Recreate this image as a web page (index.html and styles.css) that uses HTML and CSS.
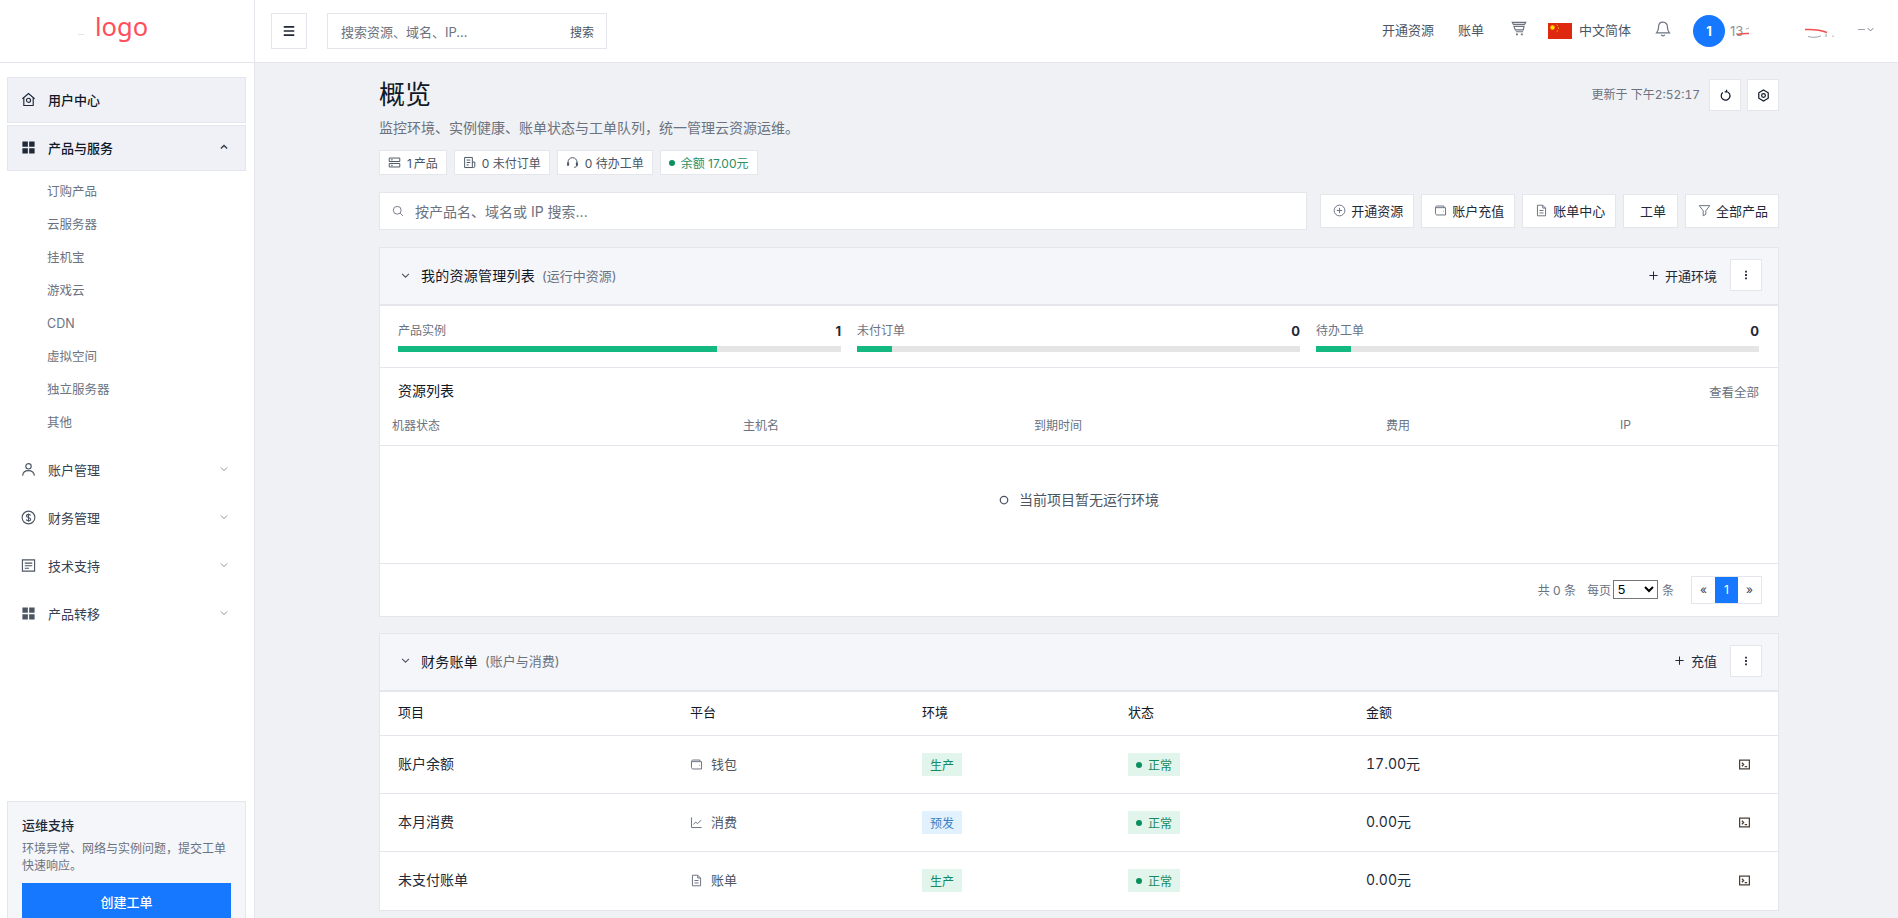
FILE: index.html
```html
<!DOCTYPE html>
<html lang="zh-CN">
<head>
    <meta charset="UTF-8">
    <meta name="viewport" content="width=device-width, initial-scale=1.0">
    <title>概览</title>
    <link rel="stylesheet" href="styles.css">
</head>
<body>
    <svg class="sprite" xmlns="http://www.w3.org/2000/svg">
        <symbol id="i-home" viewBox="0 0 16 16"><path d="M1.5 7.2 8 1.6l6.5 5.6M3 6.2V14.4h10V6.2"/><circle cx="8" cy="8.8" r="2.2"/></symbol>
        <symbol id="i-grid" viewBox="0 0 16 16"><path class="fill" d="M1.5 1.5h5.8v5.8H1.5zM8.7 1.5h5.8v5.8H8.7zM1.5 8.7h5.8v5.8H1.5zM8.7 8.7h5.8v5.8H8.7z"/></symbol>
        <symbol id="i-up" viewBox="0 0 16 16"><path d="M3 10.5 8 5.5l5 5"/></symbol>
        <symbol id="i-down" viewBox="0 0 16 16"><path d="M3 5.5 8 10.5l5-5"/></symbol>
        <symbol id="i-user" viewBox="0 0 16 16"><circle cx="8" cy="4.6" r="2.9"/><path d="M1.8 14.6c0-3.4 2.6-5.4 6.2-5.4s6.2 2 6.2 5.4"/></symbol>
        <symbol id="i-dollar" viewBox="0 0 16 16"><circle cx="8" cy="8" r="6.8"/><path d="M10.2 5.9C9.8 5 9 4.7 8 4.7c-1.300 0-2.200.6-2.200 1.600C5.800 8.600 10.300 7.400 10.300 9.800c0 1-.9 1.600-2.300 1.600-1.100 0-2-.4-2.400-1.300M8 3.600v8.800"/></symbol>
        <symbol id="i-list" viewBox="0 0 16 16"><path d="M1.500 2h13v12h-13zM4 5.500h8M4 8.200h8M4 10.900h4.500"/></symbol>
        <symbol id="i-server" viewBox="0 0 16 16"><path d="M1.500 2.500h13v4.300h-13zM1.500 9.200h13v4.300h-13zM3.800 4.700h2M3.800 11.400h2"/></symbol>
        <symbol id="i-receipt" viewBox="0 0 16 16"><path d="M2 1.800h9.500v12.400H2zM11.500 7.500h3v5.200a1.500 1.500 0 0 1-1.500 1.500h-1.500M4.500 5h4.500M4.500 8h4.500M4.500 11h2.500"/></symbol>
        <symbol id="i-headset" viewBox="0 0 16 16"><path d="M2.500 9.500V7.500a5.500 5.500 0 0 1 11 0v2M13.500 11c0 1.900-1.500 3-3.500 3"/><path class="fill" d="M1.300 8h2.500v4H1.300zM12.200 8h2.500v4h-2.500z"/></symbol>
        <symbol id="i-search" viewBox="0 0 16 16"><circle cx="7" cy="7" r="5.200"/><path d="m11 11 3.500 3.500"/></symbol>
        <symbol id="i-plus-circle" viewBox="0 0 16 16"><circle cx="8" cy="8" r="6.600"/><path d="M8 4.800v6.400M4.800 8h6.400"/></symbol>
        <symbol id="i-wallet" viewBox="0 0 16 16"><path d="M1.800 4.500c0-1.200.8-2 2-2h8.400v2M1.800 4.500h12.400v9H3.800c-1.200 0-2-.8-2-2zM11.500 9h.8"/></symbol>
        <symbol id="i-file" viewBox="0 0 16 16"><path d="M3 1.500h6.500L13 5v9.500H3zM9.500 1.500V5H13M5.500 8h5M5.500 11h5"/></symbol>
        <symbol id="i-filter" viewBox="0 0 16 16"><path d="M1.500 2h13L9.600 8.300v4.500L6.400 14.500V8.300z"/></symbol>
        <symbol id="i-plus" viewBox="0 0 16 16"><path d="M8 2v12M2 8h12"/></symbol>
        <symbol id="i-kebab" viewBox="0 0 16 16"><path class="fill" d="M6.800 2.200h2.400v2.400H6.800zM6.800 6.800h2.400v2.400H6.800zM6.800 11.400h2.400v2.400H6.800z"/></symbol>
        <symbol id="i-refresh" viewBox="0 0 16 16"><path d="M9.200 3.100A5.400 5.400 0 1 1 4.600 4.300M9.400 .9 9.200 3.300l-2.300.4"/></symbol>
        <symbol id="i-gear" viewBox="0 0 16 16"><path d="M8 1.300 13.800 4.600v6.800L8 14.700 2.200 11.400V4.600z"/><circle cx="8" cy="8" r="2.300"/></symbol>
        <symbol id="i-terminal" viewBox="0 0 16 16"><path d="M2 2.500h12v11H2zM4.800 5.800 7 8l-2.200 2.200M8.200 10.500h3"/></symbol>
        <symbol id="i-chart" viewBox="0 0 16 16"><path d="M1.800 1.800v12.400h12.600M4.200 10.500 7 7.500l2.400 1.800 4.500-4.300"/></symbol>
        <symbol id="i-cart" viewBox="0 0 16 16"><path d="M.8 1.500h14.400L14 3.600H2zM2.600 5.700h10.800L12.600 9.500H4zM4.600 11.500h7.800"/><path class="fill" d="M4.800 13.200h2v2h-2zM10 13.200h2v2h-2z"/></symbol>
        <symbol id="i-bell" viewBox="0 0 16 16"><path d="M8 1.200c-2.700 0-4.400 2-4.400 4.600 0 3.200-.8 4.800-2 6h12.800c-1.200-1.200-2-2.800-2-6 0-2.600-1.700-4.600-4.400-4.600zM6.200 13.800c.4.800 1 1.100 1.800 1.100s1.400-.3 1.800-1.100"/></symbol>
        <symbol id="i-menu" viewBox="0 0 16 16"><path d="M2 3.200h12M2 8h12M2 12.800h12"/></symbol>
        <symbol id="i-ring" viewBox="0 0 16 16"><circle cx="8" cy="8" r="6"/></symbol>
    </svg>

    <header class="topbar">
        <div class="brand"><span class="logo-mark"></span><span class="logo">logo</span></div>
        <button class="icon-btn menu-btn"><svg class="ico ico-menu"><use href="#i-menu"/></svg></button>
        <div class="top-search">
            <span>搜索资源、域名、IP...</span>
            <span class="top-search-btn">搜索</span>
        </div>
        <nav class="top-right">
            <a class="top-link">开通资源</a>
            <a class="top-link link-bill">账单</a>
            <svg class="ico ico-cart"><use href="#i-cart"/></svg>
            <svg class="flag" viewBox="0 0 24 16">
                <rect width="24" height="16" fill="#de2910"/>
                <circle cx="4.500" cy="4.500" r="2.200" fill="#ffde00"/>
                <path d="M8.500 1.800 10 3M10.500 4.500v1.500M10 7.500 8.500 8.800" stroke="#f2a40c" stroke-width="1" fill="none"/>
            </svg>
            <a class="top-link link-lang">中文简体</a>
            <svg class="ico ico-bell"><use href="#i-bell"/></svg>
            <span class="avatar">1</span>
            <div class="user-name">
                <span class="user-text">13</span>
                <svg class="redact" viewBox="0 0 136 16">
                    <path d="M7 11.500c4-.8 8-1.200 12-1M75 6.500c9-.4 16 .4 22 3" stroke="#f0504f" stroke-width="1.500" fill="none"/>
                    <path d="M19 5c-2 .6-3 1-3 1.500M78 13.500c5 1.400 9 1 13-.6M96 11v3M103 12.500v1.500M128 6.500h7" stroke="#9ca3af" stroke-width="1" fill="none"/>
                </svg>
            </div>
            <svg class="ico ico-caret"><use href="#i-down"/></svg>
        </nav>
    </header>

    <div class="layout">
        <aside class="sidebar">
            <div class="side-nav">
                <a class="nav-item active">
                    <svg class="ico nav-ico"><use href="#i-home"/></svg>
                    <span>用户中心</span>
                </a>
                <a class="nav-item active open">
                    <svg class="ico nav-ico"><use href="#i-grid"/></svg>
                    <span>产品与服务</span>
                    <svg class="ico nav-arrow"><use href="#i-up"/></svg>
                </a>
                <div class="sub-nav">
                    <a>订购产品</a>
                    <a>云服务器</a>
                    <a>挂机宝</a>
                    <a>游戏云</a>
                    <a>CDN</a>
                    <a>虚拟空间</a>
                    <a>独立服务器</a>
                    <a>其他</a>
                </div>
                <a class="nav-item">
                    <svg class="ico nav-ico"><use href="#i-user"/></svg>
                    <span>账户管理</span>
                    <svg class="ico nav-arrow"><use href="#i-down"/></svg>
                </a>
                <a class="nav-item">
                    <svg class="ico nav-ico"><use href="#i-dollar"/></svg>
                    <span>财务管理</span>
                    <svg class="ico nav-arrow"><use href="#i-down"/></svg>
                </a>
                <a class="nav-item">
                    <svg class="ico nav-ico"><use href="#i-list"/></svg>
                    <span>技术支持</span>
                    <svg class="ico nav-arrow"><use href="#i-down"/></svg>
                </a>
                <a class="nav-item">
                    <svg class="ico nav-ico"><use href="#i-grid"/></svg>
                    <span>产品转移</span>
                    <svg class="ico nav-arrow"><use href="#i-down"/></svg>
                </a>
            </div>
            <div class="support">
                <div class="support-title">运维支持</div>
                <p>环境异常、网络与实例问题，提交工单快速响应。</p>
                <button class="support-btn">创建工单</button>
            </div>
        </aside>

        <main class="main">
            <div class="page-head">
                <div>
                    <h1>概览</h1>
                    <p class="page-desc">监控环境、实例健康、账单状态与工单队列，统一管理云资源运维。</p>
                    <div class="chips">
                        <span class="chip"><svg class="ico"><use href="#i-server"/></svg>1 产品</span>
                        <span class="chip"><svg class="ico"><use href="#i-receipt"/></svg>0 未付订单</span>
                        <span class="chip"><svg class="ico"><use href="#i-headset"/></svg>0 待办工单</span>
                        <span class="chip chip-green"><i class="dot"></i>余额 17.00元</span>
                    </div>
                </div>
                <div class="page-actions">
                    <span class="updated">更新于 下午2:52:17</span>
                    <button class="icon-btn square"><svg class="ico"><use href="#i-refresh"/></svg></button>
                    <button class="icon-btn square"><svg class="ico"><use href="#i-gear"/></svg></button>
                </div>
            </div>

            <div class="toolbar">
                <div class="main-search">
                    <svg class="ico"><use href="#i-search"/></svg>
                    <span>按产品名、域名或 IP 搜索...</span>
                </div>
                <button class="tool-btn"><svg class="ico"><use href="#i-plus-circle"/></svg>开通资源</button>
                <button class="tool-btn"><svg class="ico"><use href="#i-wallet"/></svg>账户充值</button>
                <button class="tool-btn"><svg class="ico"><use href="#i-file"/></svg>账单中心</button>
                <button class="tool-btn tool-plain">工单</button>
                <button class="tool-btn"><svg class="ico"><use href="#i-filter"/></svg>全部产品</button>
            </div>

            <section class="panel">
                <div class="panel-head">
                    <svg class="ico panel-arrow"><use href="#i-down"/></svg>
                    <h2>我的资源管理列表</h2>
                    <span class="panel-sub">(运行中资源)</span>
                    <a class="panel-action"><svg class="ico"><use href="#i-plus"/></svg>开通环境</a>
                    <button class="icon-btn kebab"><svg class="ico"><use href="#i-kebab"/></svg></button>
                </div>
                <div class="stats">
                    <div class="stat">
                        <div class="stat-row"><span>产品实例</span><b>1</b></div>
                        <div class="bar"><div class="bar-fill" style="width: 72%"></div></div>
                    </div>
                    <div class="stat">
                        <div class="stat-row"><span>未付订单</span><b>0</b></div>
                        <div class="bar"><div class="bar-fill" style="width: 8%"></div></div>
                    </div>
                    <div class="stat">
                        <div class="stat-row"><span>待办工单</span><b>0</b></div>
                        <div class="bar"><div class="bar-fill" style="width: 8%"></div></div>
                    </div>
                </div>
                <div class="list-head">
                    <h3>资源列表</h3>
                    <a>查看全部</a>
                </div>
                <table class="res-table">
                    <colgroup>
                        <col class="rc-state"><col class="rc-host"><col class="rc-expire"><col class="rc-fee"><col>
                    </colgroup>
                    <thead>
                        <tr><th>机器状态</th><th>主机名</th><th>到期时间</th><th>费用</th><th>IP</th></tr>
                    </thead>
                    <tbody>
                        <tr>
                            <td colspan="5" class="empty">
                                <svg class="ico"><use href="#i-ring"/></svg>当前项目暂无运行环境
                            </td>
                        </tr>
                    </tbody>
                </table>
                <div class="pager-row">
                    <span>共 0 条</span>
                    <span class="per-page">每页</span>
                    <select class="page-size"><option>5</option></select>
                    <span class="per-unit">条</span>
                    <div class="pager">
                        <a>«</a>
                        <a class="current">1</a>
                        <a>»</a>
                    </div>
                </div>
            </section>

            <section class="panel">
                <div class="panel-head">
                    <svg class="ico panel-arrow"><use href="#i-down"/></svg>
                    <h2>财务账单</h2>
                    <span class="panel-sub">(账户与消费)</span>
                    <a class="panel-action"><svg class="ico"><use href="#i-plus"/></svg>充值</a>
                    <button class="icon-btn kebab"><svg class="ico"><use href="#i-kebab"/></svg></button>
                </div>
                <table class="bill-table">
                    <colgroup>
                        <col class="bc-item"><col class="bc-platform"><col class="bc-env"><col class="bc-state"><col class="bc-amount"><col>
                    </colgroup>
                    <thead>
                        <tr><th>项目</th><th>平台</th><th>环境</th><th>状态</th><th>金额</th><th></th></tr>
                    </thead>
                    <tbody>
                        <tr>
                            <td>账户余额</td>
                            <td class="platform"><svg class="ico"><use href="#i-wallet"/></svg>钱包</td>
                            <td class="tag-cell"><span class="tag tag-green">生产</span></td>
                            <td class="tag-cell"><span class="tag tag-green"><i class="dot"></i>正常</span></td>
                            <td class="amount">17.00元</td>
                            <td class="row-action"><svg class="ico"><use href="#i-terminal"/></svg></td>
                        </tr>
                        <tr>
                            <td>本月消费</td>
                            <td class="platform"><svg class="ico"><use href="#i-chart"/></svg>消费</td>
                            <td class="tag-cell"><span class="tag tag-blue">预发</span></td>
                            <td class="tag-cell"><span class="tag tag-green"><i class="dot"></i>正常</span></td>
                            <td class="amount">0.00元</td>
                            <td class="row-action"><svg class="ico"><use href="#i-terminal"/></svg></td>
                        </tr>
                        <tr>
                            <td>未支付账单</td>
                            <td class="platform"><svg class="ico"><use href="#i-file"/></svg>账单</td>
                            <td class="tag-cell"><span class="tag tag-green">生产</span></td>
                            <td class="tag-cell"><span class="tag tag-green"><i class="dot"></i>正常</span></td>
                            <td class="amount">0.00元</td>
                            <td class="row-action"><svg class="ico"><use href="#i-terminal"/></svg></td>
                        </tr>
                    </tbody>
                </table>
            </section>
        </main>
    </div>
</body>
</html>
```

FILE: styles.css
```css
* {
    box-sizing: border-box;
}
html, body {
    height: 918px;
    margin: 0;
    overflow: hidden;
}
body {
    font-family: Inter, "Noto Sans CJK SC", sans-serif;
    font-size: 13px;
    color: #1f2937;
    background-color: #eff1f5;
}
h1, h2, h3, p {
    margin: 0;
}
button {
    font: inherit;
    color: inherit;
    cursor: pointer;
}
.sprite {
    display: none;
}
.ico {
    width: 14px;
    height: 14px;
    flex: none;
    fill: none;
    stroke: currentColor;
    stroke-width: 1.2;
}
.fill {
    fill: currentColor;
    stroke: none;
}
.icon-btn {
    display: flex;
    align-items: center;
    justify-content: center;
    padding: 0;
    background: #fff;
    border: 1px solid #e4e6eb;
}

/* top bar */
.topbar {
    display: flex;
    align-items: center;
    height: 63px;
    background: #fff;
    border-bottom: 1px solid #e4e6eb;
}
.brand {
    position: relative;
    width: 255px;
    height: 62px;
    flex: none;
    padding-left: 95px;
    border-right: 1px solid #e4e6eb;
    font-family: "Noto Sans", sans-serif;
    font-size: 25.5px;
    line-height: 53px;
    color: #ff4d5b;
}
.logo-mark {
    position: absolute;
    left: 78px;
    top: 34px;
    width: 6px;
    height: 1px;
    background: #e3e6e6;
}
.menu-btn {
    width: 36px;
    height: 36px;
    margin-left: 16px;
}
.ico-menu {
    stroke-width: 1.900;
    color: #1f2937;
}
.top-search {
    display: flex;
    align-items: center;
    justify-content: space-between;
    width: 280px;
    height: 36px;
    margin-left: 20px;
    padding: 0 12px 0 13px;
    border: 1px solid #e4e6eb;
    color: #6b7280;
}
.top-search-btn {
    font-size: 12px;
    color: #4b5563;
}
.top-right {
    display: flex;
    align-items: center;
    margin-left: auto;
    padding-right: 23px;
    color: #6b7280;
}
.top-link {
    margin-top: -3px;
    color: #4b5563;
}
.link-bill {
    margin-left: 24px;
}
.ico-cart {
    width: 16px;
    height: 15px;
    margin: -6px 0 0 27px;
}
.flag {
    width: 24px;
    height: 16px;
    margin-left: 21px;
}
.link-lang {
    margin-left: 7px;
}
.ico-bell {
    width: 16px;
    height: 16px;
    margin: -4px 0 0 24px;
}
.avatar {
    display: flex;
    align-items: center;
    justify-content: center;
    width: 32px;
    height: 32px;
    margin-left: 22px;
    border-radius: 50%;
    background: #1677ff;
    color: #fff;
    font-weight: 700;
}
.user-name {
    position: relative;
    width: 136px;
    height: 16px;
    margin-left: 5px;
}
.user-text {
    display: block;
    line-height: 16px;
    color: #8b929c;
}
.redact {
    position: absolute;
    left: 0;
    top: 0;
    width: 136px;
    height: 16px;
}
.ico-caret {
    width: 9px;
    height: 9px;
    margin-top: -3px;
    stroke-width: 1.600;
}

/* sidebar */
.layout {
    display: flex;
    height: 855px;
}
.sidebar {
    width: 255px;
    flex: none;
    overflow: hidden;
    background: #fff;
    border-right: 1px solid #e4e6eb;
}
.side-nav {
    height: 738px;
    padding: 14px 8px 0 7px;
}
.nav-item {
    display: flex;
    align-items: center;
    height: 46px;
    margin-bottom: 2px;
    padding: 0 16px 2px 13px;
    border: 1px solid transparent;
    color: #374151;
}
.nav-item.active {
    background: #eff1f6;
    border-color: #e4e6eb;
    color: #111827;
    font-weight: 500;
}
.nav-ico {
    width: 15px;
    height: 15px;
    margin-right: 12px;
    color: #4b5563;
}
.active .nav-ico {
    color: #1f2937;
}
.nav-arrow {
    width: 10px;
    height: 10px;
    margin-left: auto;
    stroke-width: 1.600;
    color: #8b929c;
}
.open .nav-arrow {
    stroke-width: 2.400;
    color: #374151;
}
.sub-nav {
    margin-top: 4px;
    margin-bottom: 8px;
}
.sub-nav a {
    display: block;
    height: 33px;
    padding-left: 40px;
    font-size: 12.500px;
    line-height: 33px;
    color: #6b7280;
}
.support {
    margin-left: 7px;
    width: 239px;
    padding: 13px 14px 14px;
    background: #f5f6fa;
    border: 1px solid #e4e6eb;
}
.support-title {
    font-weight: 500;
    line-height: 20px;
}
.support p {
    margin-top: 5px;
    font-size: 12px;
    line-height: 17px;
    color: #6b7280;
}
.support-btn {
    display: block;
    width: 100%;
    height: 36px;
    margin-top: 9px;
    background: #1677ff;
    border: none;
    color: #fff;
    font-weight: 500;
}

/* main */
.main {
    flex: 1;
    min-width: 0;
    padding: 14px 119px 0 124px;
}
.page-head {
    display: flex;
    justify-content: space-between;
}
h1 {
    font-size: 26px;
    font-weight: 400;
    line-height: 36px;
    color: #111827;
}
.page-desc {
    margin-top: 5px;
    font-size: 14px;
    line-height: 20px;
    color: #6b7280;
}
.chips {
    display: flex;
    gap: 7px;
    margin-top: 12px;
}
.chip {
    display: flex;
    align-items: center;
    gap: 6px;
    height: 25px;
    padding: 0 8px;
    background: #fff;
    border: 1px solid #e4e6eb;
    font-size: 12px;
    color: #4b5563;
}
.chip:first-child {
    word-spacing: -1.500px;
}
.chip .ico {
    width: 13px;
    height: 13px;
}
.chip-green {
    color: #2b8f63;
}
.dot {
    display: inline-block;
    width: 6px;
    height: 6px;
    border-radius: 50%;
    background: #0a8f5e;
}
.page-actions {
    display: flex;
    align-items: flex-start;
    gap: 6px;
    padding-top: 2px;
}
.updated {
    margin-right: 3px;
    font-size: 12px;
    font-variant-numeric: tabular-nums;
    line-height: 32px;
    color: #6b7280;
}
.square {
    width: 32px;
    height: 32px;
    color: #111827;
}
.square .ico {
    width: 13px;
    height: 13px;
    stroke-width: 1.500;
}
.toolbar {
    display: flex;
    align-items: center;
    gap: 7px;
    margin-top: 17px;
}
.main-search {
    display: flex;
    align-items: center;
    gap: 11px;
    width: 929px;
    height: 38px;
    margin-right: 6px;
    padding-left: 12px;
    background: #fff;
    border: 1px solid #e4e6eb;
    font-size: 14px;
    color: #6b7280;
}
.main-search .ico {
    width: 12px;
    height: 12px;
}
.tool-btn {
    display: flex;
    align-items: center;
    gap: 5px;
    width: 94px;
    height: 34px;
    padding: 0 0 1px 12px;
    background: #fff;
    border: 1px solid #e4e6eb;
    color: #1f2937;
}
.tool-btn .ico {
    width: 13px;
    height: 13px;
    color: #6b7280;
}
.tool-plain {
    width: 55px;
    padding-left: 16px;
}

/* panels */
.panel {
    margin-top: 17px;
    background: #fff;
    border: 1px solid #e4e6eb;
}
.panel + .panel {
    margin-top: 16px;
}
.panel-head {
    display: flex;
    align-items: center;
    height: 58px;
    padding: 0 16px 2px 20px;
    background: #f5f6fa;
    border-bottom: 2px solid #e4e6eb;
}
.panel-arrow {
    width: 11px;
    height: 11px;
    margin-right: 10px;
    stroke-width: 1.500;
    color: #4b5563;
}
h2 {
    font-size: 14px;
    font-weight: 400;
    letter-spacing: .25px;
    color: #111827;
}
.panel-sub {
    margin-left: 7px;
    font-size: 13px;
    color: #6b7280;
}
.panel-action {
    display: flex;
    align-items: center;
    gap: 6px;
    margin-left: auto;
    color: #1f2937;
}
.panel-action .ico {
    width: 11px;
    height: 11px;
    stroke-width: 1.500;
}
.kebab {
    width: 32px;
    height: 32px;
    margin-left: 13px;
}
.kebab .ico {
    width: 12px;
    height: 12px;
}
.stats {
    display: grid;
    grid-template-columns: repeat(3, 1fr);
    gap: 16px;
    height: 62px;
    padding: 16px 19px 0 18px;
    border-bottom: 1px solid #e4e6eb;
}
.stat-row {
    display: flex;
    justify-content: space-between;
    height: 18px;
    font-size: 12px;
    line-height: 18px;
    color: #6b7280;
}
.stat-row b {
    font-size: 13px;
    color: #1f2937;
}
.bar {
    height: 6px;
    margin-top: 6px;
    background: #e5e5e5;
}
.bar-fill {
    height: 100%;
    background: #13b981;
}
.list-head {
    display: flex;
    align-items: center;
    justify-content: space-between;
    height: 36px;
    padding: 10px 19px 0 18px;
}
h3 {
    font-size: 14px;
    font-weight: 400;
    line-height: 20px;
    color: #111827;
}
.list-head a {
    font-size: 12.500px;
    color: #6b7280;
}
table {
    width: 100%;
    border-collapse: collapse;
    table-layout: fixed;
}
.res-table th {
    height: 41px;
    padding-left: 12px;
    border-bottom: 1px solid #e4e6eb;
    font-size: 12px;
    font-weight: 400;
    text-align: left;
    color: #6b7280;
}
.rc-state {
    width: 351px;
}
.rc-host {
    width: 291px;
}
.rc-expire {
    width: 352px;
}
.rc-fee {
    width: 234px;
}
.empty {
    height: 118px;
    padding-bottom: 12px;
    border-bottom: 1px solid #e4e6eb;
    font-size: 14px;
    text-align: center;
    color: #4b5563;
}
.empty .ico {
    width: 10px;
    height: 10px;
    margin-right: 10px;
    stroke-width: 2;
}
.pager-row {
    display: flex;
    align-items: center;
    justify-content: flex-end;
    height: 52px;
    padding-right: 16px;
    font-size: 12px;
    color: #6b7280;
}
.per-page {
    margin-left: 11px;
}
.page-size {
    width: 45px;
    height: 19px;
    margin-left: 2px;
    font-size: 13px;
    background: #fff;
}
.per-unit {
    margin-left: 4px;
}
.pager {
    display: flex;
    height: 28px;
    margin-left: 17px;
    border: 1px solid #e4e6eb;
}
.pager a {
    width: 23px;
    text-align: center;
    line-height: 26px;
    color: #374151;
}
.pager .current {
    background: #1677ff;
    color: #fff;
}
.bill-table th {
    height: 44px;
    padding: 0 0 3px 18px;
    border-bottom: 1px solid #e4e6eb;
    font-weight: 400;
    text-align: left;
    color: #111827;
}
.bill-table td {
    height: 58px;
    padding: 0 0 3px 18px;
    border-bottom: 1px solid #e4e6eb;
    font-size: 14px;
}
.bill-table tr:last-child td {
    border-bottom: none;
}
.bc-item {
    width: 292px;
}
.bc-platform {
    width: 232px;
}
.bc-env {
    width: 206px;
}
.bc-state {
    width: 238px;
}
.bc-amount {
    width: 330px;
}
.bill-table .platform {
    font-size: 13px;
    color: #4b5563;
}
.platform .ico {
    width: 13px;
    height: 13px;
    margin-right: 8px;
    vertical-align: -2px;
    color: #6b7280;
}
.bill-table .tag-cell {
    padding-bottom: 0;
}
.amount {
    font-variant-numeric: tabular-nums;
}
.tag {
    display: inline-flex;
    align-items: center;
    gap: 6px;
    height: 23px;
    padding: 0 8px;
    font-size: 12px;
}
.tag-green {
    background: #e1f5ec;
    color: #158a62;
}
.tag-blue {
    background: #e1f2fe;
    color: #3a7fc4;
}
.bill-table .row-action {
    padding-right: 27px;
    text-align: right;
    color: #4b4038;
}
.row-action .ico {
    width: 13px;
    height: 13px;
    vertical-align: -2px;
    stroke-width: 1.500;
}
```
